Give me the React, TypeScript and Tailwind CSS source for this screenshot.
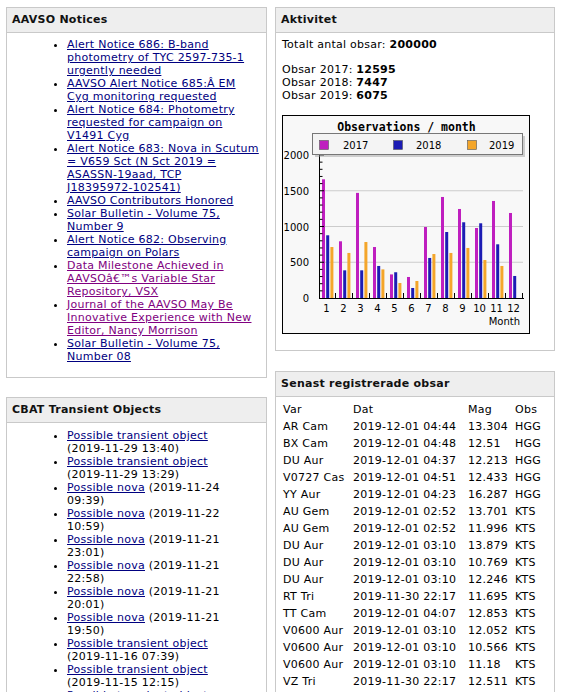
const notices: { lines: string[]; visited?: boolean }[] = [
  { lines: ['Alert Notice 686: B-band', 'photometry of TYC 2597-735-1', 'urgently needed'] },
  { lines: ['AAVSO Alert Notice 685:Â EM', 'Cyg monitoring requested'] },
  { lines: ['Alert Notice 684: Photometry', 'requested for campaign on', 'V1491 Cyg'] },
  { lines: ['Alert Notice 683: Nova in Scutum', '= V659 Sct (N Sct 2019 =', 'ASASSN-19aad, TCP', 'J18395972-102541)'] },
  { lines: ['AAVSO Contributors Honored'] },
  { lines: ['Solar Bulletin - Volume 75,', 'Number 9'] },
  { lines: ['Alert Notice 682: Observing', 'campaign on Polars'] },
  { lines: ['Data Milestone Achieved in', 'AAVSOâ€™s Variable Star', 'Repository, VSX'], visited: true },
  { lines: ['Journal of the AAVSO May Be', 'Innovative Experience with New', 'Editor, Nancy Morrison'], visited: true },
  { lines: ['Solar Bulletin - Volume 75,', 'Number 08'] },
];

// [link text, rest of first line, second line]
const transients: [string, string, string][] = [
  ['Possible transient object', '', '(2019-11-29 13:40)'],
  ['Possible transient object', '', '(2019-11-29 13:29)'],
  ['Possible nova', ' (2019-11-24', '09:39)'],
  ['Possible nova', ' (2019-11-22', '10:59)'],
  ['Possible nova', ' (2019-11-21', '23:01)'],
  ['Possible nova', ' (2019-11-21', '22:58)'],
  ['Possible nova', ' (2019-11-21', '20:01)'],
  ['Possible nova', ' (2019-11-21', '19:50)'],
  ['Possible transient object', '', '(2019-11-16 07:39)'],
  ['Possible transient object', '', '(2019-11-15 12:15)'],
  ['Possible transient object', '', '(2019-11-14 03:26)'],
];

const obs: string[][] = [
  ['AR Cam', '2019-12-01 04:44', '13.304', 'HGG'],
  ['BX Cam', '2019-12-01 04:48', '12.51', 'HGG'],
  ['DU Aur', '2019-12-01 04:37', '12.213', 'HGG'],
  ['V0727 Cas', '2019-12-01 04:51', '12.433', 'HGG'],
  ['YY Aur', '2019-12-01 04:23', '16.287', 'HGG'],
  ['AU Gem', '2019-12-01 02:52', '13.701', 'KTS'],
  ['AU Gem', '2019-12-01 02:52', '11.996', 'KTS'],
  ['DU Aur', '2019-12-01 03:10', '13.879', 'KTS'],
  ['DU Aur', '2019-12-01 03:10', '10.769', 'KTS'],
  ['DU Aur', '2019-12-01 03:10', '12.246', 'KTS'],
  ['RT Tri', '2019-11-30 22:17', '11.695', 'KTS'],
  ['TT Cam', '2019-12-01 04:07', '12.853', 'KTS'],
  ['V0600 Aur', '2019-12-01 03:10', '12.052', 'KTS'],
  ['V0600 Aur', '2019-12-01 03:10', '10.566', 'KTS'],
  ['V0600 Aur', '2019-12-01 03:10', '11.18', 'KTS'],
  ['VZ Tri', '2019-11-30 22:17', '12.511', 'KTS'],
];

const monthly = [
  [1660, 877, 713],
  [793, 387, 630],
  [1470, 387, 783],
  [713, 448, 400],
  [330, 360, 210],
  [294, 140, 238],
  [993, 560, 615],
  [1413, 923, 630],
  [1245, 1059, 700],
  [979, 1045, 531],
  [1357, 751, 448],
  [1189, 308, 0],
];
const colors = ['#bf1fbf', '#1c1cb4', '#f4a62a'];

function Panel({
  title,
  className,
  children,
}: {
  title: string;
  className?: string;
  children: React.ReactNode;
}) {
  return (
    <div className={'border border-[#c9c9c9] bg-white overflow-hidden ' + (className ?? '')}>
      <div className="h-[25px] bg-[#eeeeee] border-b border-[#c9c9c9] px-[5px] font-bold leading-[24px] text-[#111]">
        {title}
      </div>
      {children}
    </div>
  );
}

function Chart() {
  const x0 = 37;
  const y0 = 183;
  const k = 143 / 2000;
  const gw = 17;
  const ticks = [];
  for (let v = 100; v <= 2000; v += 100) {
    const y = y0 - v * k;
    ticks.push(<line key={v} x1={x0} x2={x0 + (v % 500 === 0 ? 5 : 3.5)} y1={y} y2={y} stroke="#000" />);
  }
  return (
    <svg width="248" height="219" className="block tracking-normal">
      <rect x="0.5" y="0.5" width="247" height="218" fill="#f8f8f8" stroke="#000" />
      <text x="124.5" y="16" textAnchor="middle" fontFamily="'DejaVu Sans Mono', monospace" fontWeight="bold" fontSize="11.5" fill="#000">
        Observations / month
      </text>
      {[1500, 1000, 500].map((v) => (
        <line key={v} x1={x0} x2={241} y1={y0 - v * k} y2={y0 - v * k} stroke="#cccccc" />
      ))}
      {[2000, 1500, 1000, 500, 0].map((v) => (
        <text key={v} x="27" y={y0 - v * k + 4} textAnchor="end" fontFamily="'DejaVu Sans', sans-serif" fontSize="10" fill="#000">
          {v}
        </text>
      ))}
      {monthly.map((m, g) =>
        m.map((v, i) =>
          v > 0 ? (
            <rect key={g + '-' + i} x={x0 + g * gw + 3 + i * 4.2} y={y0 - v * k} width="3" height={v * k} fill={colors[i]} />
          ) : null,
        ),
      )}
      {ticks}
      {monthly.map((_, g) => (
        <line key={g} x1={x0 + (g + 1) * gw - 0.5} x2={x0 + (g + 1) * gw - 0.5} y1={y0} y2={y0 - 5} stroke="#000" />
      ))}
      <line x1={x0 + 0.5} x2={x0 + 0.5} y1={40} y2={y0} stroke="#000" />
      <line x1={x0} x2={242} y1={y0 + 0.5} y2={y0 + 0.5} stroke="#000" />
      {monthly.map((_, g) => (
        <text key={g} x={x0 + g * gw + 7.5} y="197" textAnchor="middle" fontFamily="'DejaVu Sans', sans-serif" fontSize="10" fill="#000">
          {g + 1}
        </text>
      ))}
      <text x="238" y="210" textAnchor="end" fontFamily="'DejaVu Sans', sans-serif" fontSize="10" fill="#000">
        Month
      </text>
      <rect x="33" y="21" width="210" height="21" fill="#999" opacity="0.45" />
      <rect x="30.5" y="18.5" width="210" height="21" fill="#f4f4f4" stroke="#777" />
      {['2017', '2018', '2019'].map((y, i) => (
        <g key={y}>
          <rect x={37.5 + i * 74} y="25.5" width="9" height="9" fill={colors[i]} stroke="#555" strokeWidth="0.6" />
          <text x={61 + i * 73} y="34" fontFamily="'DejaVu Sans', sans-serif" fontSize="10" fill="#000">
            {y}
          </text>
        </g>
      ))}
    </svg>
  );
}

export default function App() {
  return (
    <div className="min-h-[692px] bg-white pl-[6px] pt-[7px] font-['DejaVu_Sans',Verdana,sans-serif] text-[11px] leading-[13px] tracking-[0.25px] text-black">
      <div className="flex items-start gap-[8px]">
        <div className="w-[261px] shrink-0">
          <Panel title="AAVSO Notices" className="h-[371px]">
            <ul className="list-disc pl-[60px] pt-[5px]">
              {notices.map((n, i) => (
                <li key={i} className="whitespace-nowrap">
                  <a href="#" className={'underline ' + (n.visited ? 'text-[#800080]' : 'text-[#000080]')}>
                    {n.lines.map((l, j) => (
                      <span key={j}>
                        {j > 0 && <br />}
                        {l}
                      </span>
                    ))}
                  </a>
                </li>
              ))}
            </ul>
          </Panel>
          <Panel title="CBAT Transient Objects" className="mt-[19px]">
            <ul className="list-disc pl-[60px] pt-[6px] pb-[10px]">
              {transients.map(([link, rest, line2], i) => (
                <li key={i} className="whitespace-nowrap">
                  <a href="#" className="underline text-[#000080]">
                    {link}
                  </a>
                  {rest}
                  <br />
                  {line2}
                </li>
              ))}
            </ul>
          </Panel>
        </div>
        <div className="w-[280px] shrink-0">
          <Panel title="Aktivitet" className="h-[344px]">
            <div className="px-[6px] pt-[5px]">
              <div>
                Totalt antal obsar: <b>200000</b>
              </div>
              <div className="mt-[12px]">
                Obsar 2017: <b>12595</b>
              </div>
              <div>
                Obsar 2018: <b>7447</b>
              </div>
              <div>
                Obsar 2019: <b>6075</b>
              </div>
              <div className="mt-[13px]">
                <Chart />
              </div>
            </div>
          </Panel>
          <Panel title="Senast registrerade obsar" className="mt-[20px]">
            <div className="px-[7px] pt-[5px] pb-[6px]">
              <div className="grid grid-cols-[70px_115px_47px_1fr] h-[16px] leading-[16px] whitespace-nowrap">
                <span>Var</span>
                <span>Dat</span>
                <span>Mag</span>
                <span>Obs</span>
              </div>
              {obs.map((r, i) => (
                <div key={i} className="grid grid-cols-[70px_115px_47px_1fr] h-[17px] leading-[17px] whitespace-nowrap">
                  {r.map((c, j) => (
                    <span key={j}>{c}</span>
                  ))}
                </div>
              ))}
            </div>
          </Panel>
        </div>
      </div>
    </div>
  );
}
